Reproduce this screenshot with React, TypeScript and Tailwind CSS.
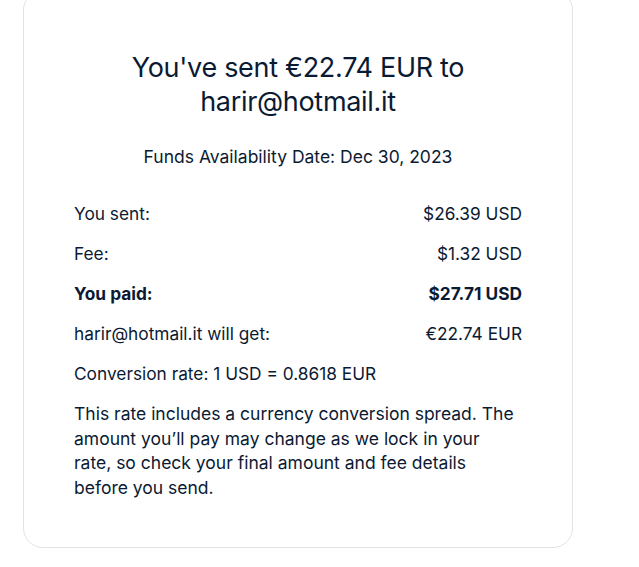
export default function App() {
  const rows = [
    { l: "You sent:", r: "$26.39 USD", b: false },
    { l: "Fee:", r: "$1.32 USD", b: false },
    { l: "You paid:", r: "$27.71 USD", b: true },
    { l: "harir@hotmail.it will get:", r: "€22.74 EUR", b: false },
  ];
  return (
    <div className="w-[639px] h-[567px] bg-white overflow-hidden" style={{ fontFamily: "Inter, 'Liberation Sans', sans-serif" }}>
      <div className="ml-[23px] mt-[-10px] w-[550px] h-[558px] rounded-[20px] border border-[#e3e3e3] text-[#0b1a33] px-[50px] pt-[60px]">
        <h1 className="text-center text-[27px] leading-[34px] tracking-[-0.3px]">
          You've sent €22.74 EUR to
          <br />
          harir@hotmail.it
        </h1>
        <p className="text-center text-[17.5px] leading-[24px] mt-[26px]">Funds Availability Date: Dec 30, 2023</p>
        <div className="mt-[33px] flex flex-col gap-[16px] text-[17.3px] leading-[24px]">
          {rows.map((row) => (
            <div key={row.l} className={"flex justify-between " + (row.b ? "font-bold" : "")}>
              <span>{row.l}</span>
              <span>{row.r}</span>
            </div>
          ))}
          <div>Conversion rate: 1 USD = 0.8618 EUR</div>
        </div>
        <p className="mt-[16px] text-[17.5px] leading-[24.5px] pr-[6px]">
          This rate includes a currency conversion spread. The amount you’ll pay may change as we lock in your rate, so check your final amount and fee details before you send.
        </p>
      </div>
    </div>
  );
}
